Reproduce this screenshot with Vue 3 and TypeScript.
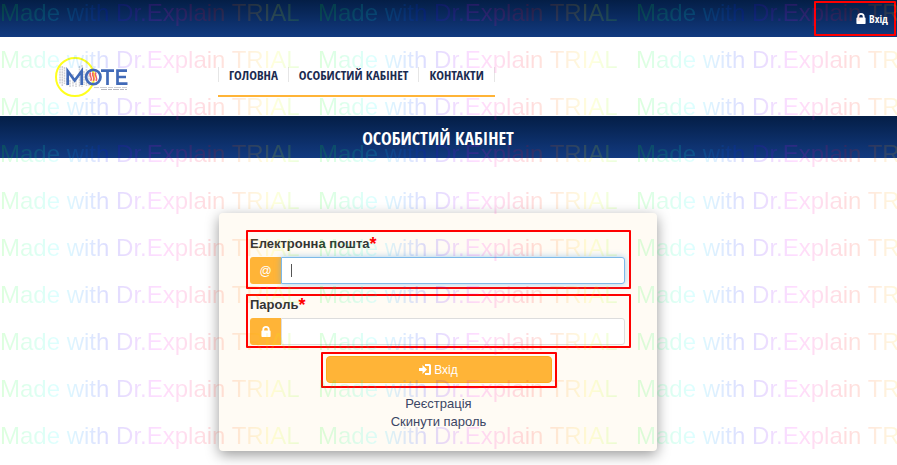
<script setup lang="ts">
import { ref } from 'vue'

interface NavItem {
  label: string
  href: string
}

const navItems: NavItem[] = [
  { label: 'ГОЛОВНА', href: '#home' },
  { label: 'ОСОБИСТИЙ КАБІНЕТ', href: '#account' },
  { label: 'КОНТАКТИ', href: '#contacts' },
]

const watermark = 'Made with Dr.Explain TRIAL'
const watermarkCells = 30

const email = ref('')
const password = ref('')
</script>

<template>
  <div class="page">
    <div class="topbar">
      <a class="login-link marked" href="#login">
        <svg class="lock" viewBox="0 0 10 12" aria-hidden="true">
          <path fill-rule="evenodd" d="M1 5V4a4 4 0 0 1 8 0v1h.3q.7 0 .7.7v5.6q0 .7-.7.7H.7Q0 12 0 11.300V5.700Q0 5 .7 5zM3 5h4V4a2 2 0 0 0-4 0z" />
        </svg>
        <span>Вхід</span>
      </a>
    </div>

    <header class="header">
      <a class="logo" href="#home" aria-label="MOTE">
        <svg viewBox="0 0 76 42" width="76" height="42">
          <g stroke="#cfcfd4" stroke-width="1.500" stroke-dasharray="2 .6" fill="none">
            <path d="M5 10v18M7.300 10v20M9.500 11v17M12 22v8M15 24v7M18 18v13M21 22v9M24.500 10v21M27 9v22M29 15v14M31.500 13v17M34 14v16" />
          </g>
          <circle cx="20" cy="21" r="19" fill="none" stroke="#ffff1e" stroke-width="2" />
          <g fill="none" stroke="#416ab8" stroke-width="2.700">
            <path d="M12.700 29V15L19.700 24.500L26.700 15V29" />
            <circle cx="38.300" cy="21" r="7.200" />
            <path d="M46 14.700H59M52.500 14.700V29M72 14.700H62.500V27.600H72.500M62.500 21H71" />
          </g>
          <path d="M35.700 16.500q-1.300 1.500 0 4t0 4.500M38.300 16.500q-1.300 1.500 0 4t0 4.500M41 16.500q-1.300 1.500 0 4t0 4.500" fill="none" stroke="#f0616c" stroke-width="1.600" />
          <path d="M39 31.500H72" stroke="#cfcfd4" stroke-dasharray="5 1 7 1" />
          <path d="M46 33.500H72" stroke="#b9b9c0" stroke-dasharray="6 1 4 1" />
        </svg>
      </a>
      <nav class="nav">
        <a v-for="item in navItems" :key="item.href" :href="item.href"><span>{{ item.label }}</span></a>
      </nav>
    </header>

    <div class="title-bar">
      <h1>ОСОБИСТИЙ КАБІНЕТ</h1>
    </div>

    <main class="main">
      <form class="card" @submit.prevent>
        <div class="group roomy marked">
          <label for="email">Електронна пошта<span class="required">*</span></label>
          <div class="field active">
            <span class="addon">@</span>
            <input id="email" v-model="email" type="email" />
            <span v-if="!email" class="caret"></span>
          </div>
        </div>
        <div class="group marked">
          <label for="password">Пароль<span class="required">*</span></label>
          <div class="field">
            <span class="addon">
              <svg class="lock" viewBox="0 0 10 12" aria-hidden="true">
                <path fill-rule="evenodd" d="M1 5V4a4 4 0 0 1 8 0v1h.3q.7 0 .7.7v5.6q0 .7-.7.7H.7Q0 12 0 11.300V5.700Q0 5 .7 5zM3 5h4V4a2 2 0 0 0-4 0z" />
              </svg>
            </span>
            <input id="password" v-model="password" type="password" />
          </div>
        </div>
        <div class="submit marked">
          <button type="submit">
            <svg viewBox="0 0 12 11" width="12" height="11" aria-hidden="true">
              <path d="M0 4h3.500V1L8 5.500L3.500 10V7H0z" />
              <path d="M6 0h4.500Q12 0 12 1.500v8Q12 11 10.500 11H6V9h4V2H6z" />
            </svg>
            <span>Вхід</span>
          </button>
        </div>
        <a class="text-link" href="#register">Реєстрація</a>
        <a class="text-link" href="#reset">Скинути пароль</a>
      </form>
    </main>

    <div class="watermark" aria-hidden="true">
      <span v-for="n in watermarkCells" :key="n">{{ watermark }}</span>
    </div>
  </div>
</template>

<style>
body {
  margin: 0;
  background: #fff;
}
</style>

<style scoped>
* {
  box-sizing: border-box;
}

.page {
  position: relative;
  overflow: hidden;
  min-height: 100vh;
  font-family: "Liberation Sans", Arial, sans-serif;
  color: #333;
}

a {
  color: inherit;
  text-decoration: none;
}

.marked {
  border: 2px solid #f00;
  border-radius: 1px;
}

.topbar {
  display: flex;
  justify-content: flex-end;
  height: 37px;
  padding: 1px 1px 1px 0;
  background: linear-gradient(#041e46, #123a80);
}

.login-link {
  display: flex;
  align-items: center;
  justify-content: flex-end;
  gap: 3px;
  width: 82px;
  padding-right: 6px;
  color: #fff;
  font: bold 11px "Open Sans Condensed", "Noto Sans Condensed", "Roboto Condensed", "Liberation Sans Narrow", "Open Sans", sans-serif;
}

.lock {
  width: 10px;
  height: 11px;
  fill: currentColor;
}

.header {
  display: flex;
  align-items: flex-start;
  height: 79px;
}

.logo {
  width: 218px;
  padding: 19px 0 0 55px;
}

.nav {
  display: flex;
  height: 60px;
  padding-top: 30px;
  border-bottom: 2px solid #ffb437;
}

.nav a {
  height: 15px;
  padding: 0 10px;
  border-right: 1px solid #e6e6e6;
  color: #1b2b50;
  font: bold 13px/16px "Open Sans Condensed", "Noto Sans Condensed", "Roboto Condensed", "Liberation Sans Narrow", "Open Sans", sans-serif;
  white-space: nowrap;
}

.nav a:first-child {
  border-left: 1px solid #e6e6e6;
}

.title-bar {
  height: 42px;
  padding-right: 21px;
  background: linear-gradient(#041e46, #123a80);
  text-align: center;
}

h1 {
  margin: 0;
  color: #fff;
  font: bold 18px/44px "Open Sans Condensed", "Noto Sans Condensed", "Roboto Condensed", "Liberation Sans Narrow", "Open Sans", sans-serif;
}

.main {
  padding: 55px 21px 14px 0;
}

.card {
  display: flex;
  flex-direction: column;
  width: 50%;
  margin: 0 auto;
  padding: 17px 26px 20px 27px;
  border-radius: 4px;
  background: #fffbf4;
  box-shadow: 0 4px 14px rgba(0, 0, 0, 0.4);
}

.group {
  padding: 0 4px 1px 2px;
  margin-bottom: 5px;
}

.roomy {
  padding-top: 3px;
  padding-bottom: 3px;
}

label {
  display: block;
  height: 22px;
  font-size: 13px;
  font-weight: bold;
  line-height: 18px;
}

.required {
  color: #f00;
  font-size: 18px;
  line-height: 16px;
  vertical-align: -2px;
}

.field {
  position: relative;
  display: flex;
  height: 27px;
}

.addon {
  display: flex;
  align-items: center;
  justify-content: center;
  width: 31px;
  border-radius: 3px 0 0 3px;
  background: #ffb437;
  color: #fff;
  font-size: 12px;
}

input {
  flex: 1;
  min-width: 0;
  padding: 0 9px;
  border: 1px solid #ddd;
  border-radius: 0 3px 3px 0;
  outline: none;
  background: #fff;
  font-size: 13px;
}

.active input {
  border-color: #7db9e8;
  box-shadow: 0 0 6px rgba(102, 175, 233, 0.6);
}

.caret {
  position: absolute;
  top: 7px;
  left: 41px;
  width: 1px;
  height: 13px;
  background: #555;
}

.submit {
  width: 236px;
  margin: -1px auto 7px;
  padding: 2px 3px 3px;
}

button {
  display: flex;
  align-items: center;
  justify-content: center;
  gap: 3px;
  width: 100%;
  height: 27px;
  border: 1px solid #ffab1c;
  border-radius: 4px;
  background: #ffb437;
  color: #fff;
  font: 12px "Liberation Sans", Arial, sans-serif;
}

button svg {
  fill: currentColor;
}

.text-link {
  align-self: center;
  color: #3b4664;
  font-size: 13px;
  line-height: 18px;
}

.watermark {
  position: absolute;
  inset: 0;
  display: grid;
  grid-template-columns: repeat(3, 318px);
  grid-auto-rows: 47px;
  opacity: 0.13;
  pointer-events: none;
}

.watermark span {
  background: linear-gradient(90deg, #0f0, #0ff 18%, #00f 34%, #f0f 50%, #f00 67%, #ff0 86%, #0f0);
  background-clip: text;
  color: transparent;
  font-size: 24px;
  line-height: 26px;
  white-space: nowrap;
}
</style>
